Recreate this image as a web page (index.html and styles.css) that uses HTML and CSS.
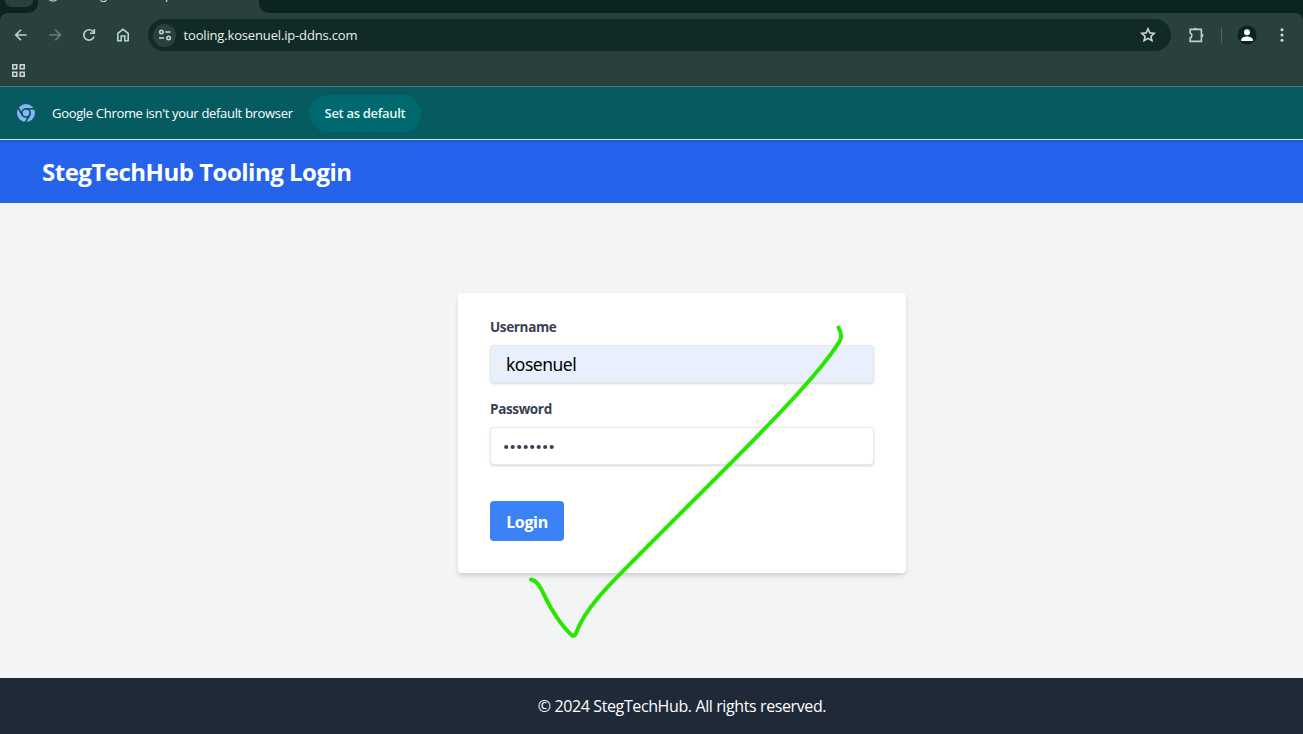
FILE: index.html
```html
<!DOCTYPE html>
<html lang="en">
<head>
<meta charset="utf-8">
<title>StegTechHub Tooling Login</title>
<link rel="stylesheet" href="styles.css">
</head>
<body>
<div class="browser">
  <div class="tabstrip">
    <div class="strip-left"><div class="tab-search"></div></div>
    <div class="tab">
      <svg class="globe" width="14" height="14" viewBox="0 0 14 14"><circle cx="7" cy="7" r="6" fill="none" stroke="#a9bcb8" stroke-width="1.5"/></svg>
      <span class="tab-title">tooling.kosenuel.ip-ddns.com</span>
    </div>
    <div class="strip-right"></div>
  </div>
  <div class="toolbar">
    <div class="nav">
      <svg width="16" height="16" viewBox="0 0 16 16"><path d="M13.500 8H3M8 2.700 2.700 8 8 13.300" /></svg>
      <svg class="dim" width="16" height="16" viewBox="0 0 16 16"><path d="M2.500 8h11M8.200 2.700 13.500 8l-5.300 5.300" /></svg>
      <svg width="16" height="16" viewBox="0 0 16 16"><path d="M13 9.500a5.200 5.200 0 1 1-1.200-5.200L13 5.800"/><path d="M13.300 2v4.300H9"/></svg>
      <svg width="16" height="16" viewBox="0 0 16 16"><path d="M2.800 6.400 8 2.300l5.200 4.100v7.400H9.800V9H6.200v4.800H2.800z"/></svg>
    </div>
    <div class="omnibox">
      <span class="site-info"><svg width="14" height="14" viewBox="0 0 14 14"><circle cx="3.400" cy="4" r="1.700"/><path d="M7.300 4H12.500M1 10h5.200"/><circle cx="10.600" cy="10" r="1.700"/></svg></span>
      <span class="url">tooling.kosenuel.ip-ddns.com</span>
      <svg class="star" width="16" height="16" viewBox="0 0 16 16"><path d="m8 1.800 1.800 4.100 4.500.4-3.400 3 1 4.400L8 11.400l-3.900 2.300 1-4.400-3.400-3 4.500-.4z"/></svg>
    </div>
    <div class="actions">
      <svg class="ext" width="18" height="18" viewBox="0 0 18 18"><path class="knob" d="M6.800 3.500a1.700 1.700 0 0 1 3.400 0zM14.800 7.800a1.700 1.700 0 0 1 0 3.400z"/><path d="M3.200 3.400h11.200v12H3.200v-3.500c2.200-.800 2.200-4.200 0-5z"/></svg>
      <span class="sep"></span>
      <svg class="avatar" width="20" height="20" viewBox="0 0 20 20"><circle class="disc" cx="10" cy="10" r="9.500"/><circle class="white" cx="10" cy="7.200" r="3"/><path class="white" d="M4 16c0-3.500 3-4.500 6-4.500s6 1 6 4.500z"/></svg>
      <svg class="menu" width="4" height="16" viewBox="0 0 4 16"><circle cx="2" cy="2.800" r="1.500"/><circle cx="2" cy="8" r="1.500"/><circle cx="2" cy="13.200" r="1.500"/></svg>
    </div>
  </div>
  <div class="bookmarks">
    <svg width="15" height="15" viewBox="0 0 15 15"><path d="M1.800 1.800h3.900v3.900H1.800zM9.300 1.800h3.900v3.900H9.300zM1.800 9.300h3.900v3.900H1.800zM9.300 9.300h3.900v3.900H9.300z"/></svg>
  </div>
  <div class="infobar">
    <svg class="chrome" width="18" height="18" viewBox="0 0 18 18"><circle cx="9" cy="9" r="9" fill="#8ab4f8"/><circle cx="9" cy="9" r="4.200" fill="none" stroke="#055b60" stroke-width="1.800"/><path d="M9 4.800h8.500M5.400 11.100 1.100 3.700M12.600 11.100 8.300 18.500" stroke="#055b60" stroke-width="1.800"/></svg>
    <span class="info-text">Google Chrome isn't your default browser</span>
    <button class="set-default"><span>Set as default</span></button>
  </div>
</div>
<div class="page">
  <header class="header"><h1>StegTechHub Tooling Login</h1></header>
  <main class="main">
    <form class="card">
      <label class="label">Username</label>
      <div class="field filled"><span>kosenuel</span></div>
      <label class="label">Password</label>
      <div class="field password"><svg width="52" height="6" viewBox="0 0 52 6"><circle cx="2.200" cy="3" r="2.100"/><circle cx="8.700" cy="3" r="2.100"/><circle cx="15.200" cy="3" r="2.100"/><circle cx="21.700" cy="3" r="2.100"/><circle cx="28.200" cy="3" r="2.100"/><circle cx="34.700" cy="3" r="2.100"/><circle cx="41.200" cy="3" r="2.100"/><circle cx="47.700" cy="3" r="2.100"/></svg></div>
      <button type="button" class="login"><span>Login</span></button>
    </form>
  </main>
  <footer class="footer"><span>© 2024 StegTechHub. All rights reserved.</span></footer>
</div>
<svg class="check" width="1303" height="734" viewBox="0 0 1303 734"><path d="M838.500 327.500C841 332 842.500 337 839.500 341.500C812 386 725 468 633 561C612 582 585 608 576.500 632Q574.500 638 571 634.500C563 627 558 620 551 608C543 595 540 581 531 579.500"/></svg>
</body>
</html>
```
FILE: styles.css
```css
* { box-sizing: border-box; }
html, body { margin: 0; height: 734px; overflow: hidden; }
body { font-family: "Open Sans", "Noto Sans", sans-serif; width: 1303px; }
svg { display: block; flex: none; }
span, h1, label { white-space: nowrap; }

.browser { background: #0b2420; color: #e6efed; }
.tabstrip { display: flex; height: 13px; background: #29403c; overflow: hidden; }
.strip-left { width: 38px; padding-left: 5px; background: #0b2420; border-bottom-right-radius: 10px; }
.tab-search { width: 28px; height: 7px; background: #29403c; border-radius: 0 0 9px 9px; }
.tab { display: flex; width: 221px; }
.strip-right { flex: 1; background: #0b2420; border-bottom-left-radius: 10px; }
.globe { margin: -12px 0 0 8px; }
.tab-title { margin: -13px 0 0 9px; font-size: 12px; line-height: 16px; letter-spacing: -0.130px; }

.toolbar { display: flex; align-items: center; height: 44px; padding: 0 0 0 12.500px; background: #29403c; border-radius: 8px 8px 0 0; }
.nav { display: flex; gap: 18.300px; width: 135.500px; }
.nav svg, .site-info svg, .star, .ext, .bookmarks svg { fill: none; stroke: #b8d4ce; stroke-width: 1.600; }
.nav .dim { stroke: #6b7f7b; }
.omnibox { display: flex; align-items: center; width: 1023px; height: 32px; padding: 0 15px 0 5px; border-radius: 16px; background: #112a26; }
.site-info { display: flex; align-items: center; justify-content: center; width: 23px; height: 23px; border-radius: 50%; background: #29403c; }
.site-info svg, .star, .bookmarks svg { stroke: #cdd5d3; }
.url { margin-left: 7.500px; font-size: 13px; letter-spacing: -0.160px; }
.star { margin-left: auto; }
.actions { display: flex; align-items: center; margin-left: 16px; }
.ext .knob { fill: #b8d4ce; stroke: none; }
.sep { width: 1px; height: 15px; margin: 0 15px 0 16px; background: #4f6a65; }
.disc { fill: #0b2420; }
.white { fill: #fff; }
.menu { margin-left: 22.500px; fill: #c9ded9; }
.bookmarks { height: 29px; padding: 6px 0 0 11px; background: #29403c; }
.infobar { display: flex; align-items: center; height: 54px; padding-left: 17px; background: #055b60; border-top: 1px solid #477d7d; border-bottom: 1px solid #d6e8e9; }
.info-text { width: 241px; margin-left: 17px; font-size: 13px; letter-spacing: -0.320px; color: #fff; }
.set-default { width: 112px; height: 37px; margin-left: 16px; padding: 0; border: 0; border-radius: 19px; background: #00696f; color: #e4f6f6; font: 600 13px "Open Sans", sans-serif; letter-spacing: -0.320px; }

.page { display: flex; flex-direction: column; width: 1364px; height: 594px; background: #f3f4f6; }
.header { height: 63px; padding: 0 42px; background: #2563eb; color: #fff; box-shadow: inset 0 3px 3px -2px #1e4fb8; }
.header h1 { margin: 0; font-size: 24px; line-height: 63px; font-weight: 700; letter-spacing: -0.500px; }
.main { display: flex; flex: 1; align-items: flex-start; justify-content: center; padding-top: 90px; }
.card { display: flex; flex-direction: column; align-items: flex-start; width: 448px; height: 280px; padding: 24px 32px; border-radius: 4px; background: #fff; box-shadow: 0 4px 6px -1px rgba(0,0,0,.1), 0 2px 4px -1px rgba(0,0,0,.1); }
.label { height: 20px; margin-bottom: 8px; color: #374151; font-size: 13.500px; line-height: 21px; font-weight: 700; letter-spacing: -0.350px; }
.field { display: flex; align-items: center; width: 384px; height: 38px; padding: 0 13px; border: 1px solid #e5e7eb; border-radius: 4px; background: #fff; box-shadow: 0 1px 3px rgba(0,0,0,.1), 0 1px 2px rgba(0,0,0,.06); }
.filled { margin-bottom: 16px; padding-left: 15px; background: #e8f0fe; color: #000; font-family: "Noto Sans", sans-serif; font-size: 17.500px; letter-spacing: -0.500px; }
.password { padding-top: 1px; fill: #374151; }
.login { width: 74px; height: 40px; margin-top: 36px; padding: 1px 0 0; border: 0; border-radius: 4px; background: #3b82f6; color: #fff; font: 700 16px "Open Sans", sans-serif; letter-spacing: -0.350px; }
.footer { height: 56px; background: #1f2937; color: #fff; font-size: 16px; line-height: 57px; text-align: center; letter-spacing: -0.390px; }
.check { position: absolute; left: 0; top: 0; fill: none; stroke: #29e600; stroke-width: 4; stroke-linecap: round; stroke-linejoin: round; pointer-events: none; }
```
